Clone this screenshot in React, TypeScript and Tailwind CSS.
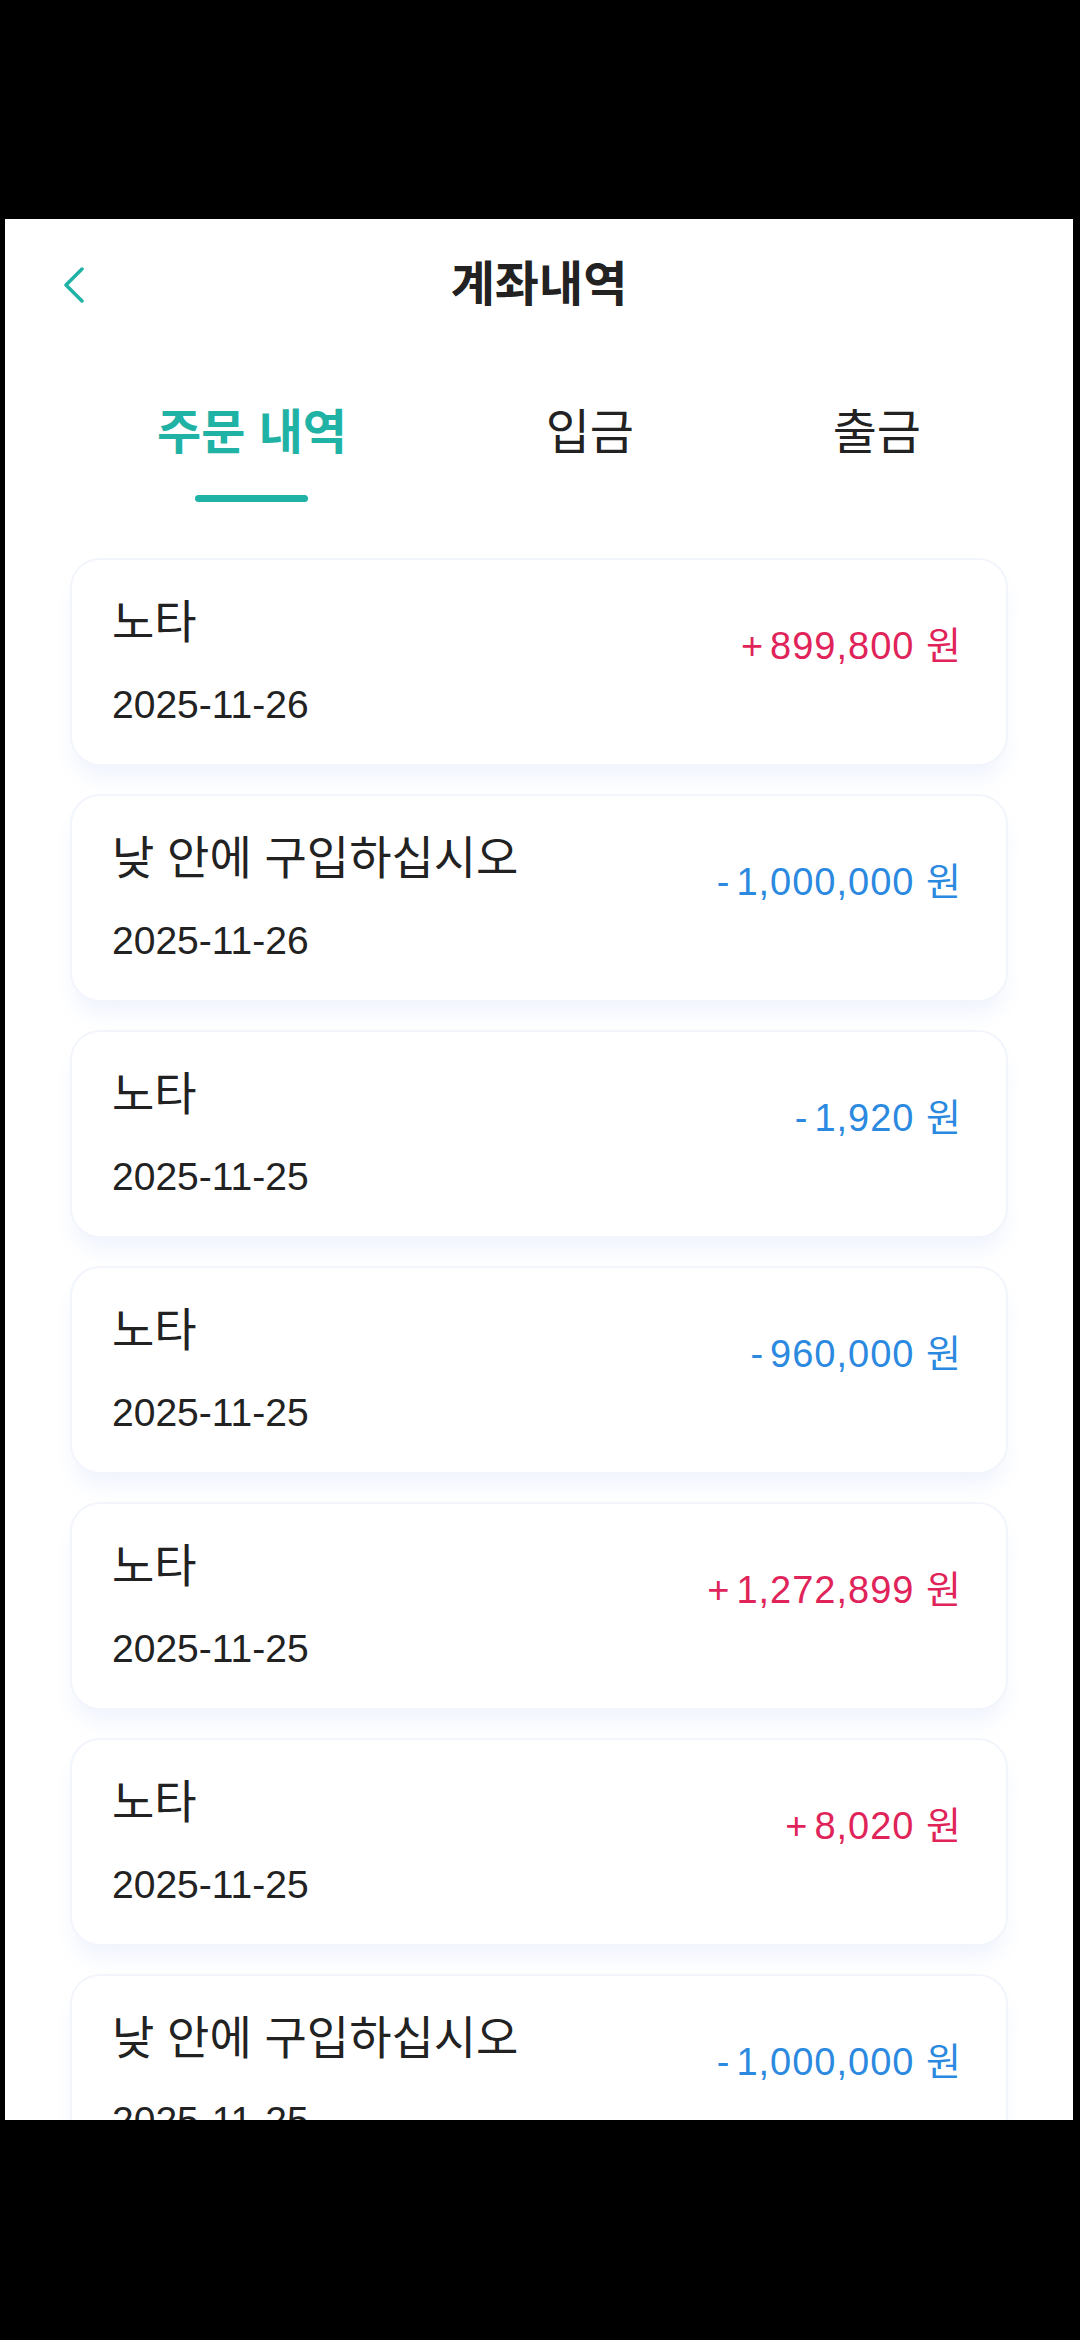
import React from "react";

const records = [
  { name: "노타", date: "2025-11-26", sign: "+", amount: "899,800" },
  { name: "낮 안에 구입하십시오", date: "2025-11-26", sign: "-", amount: "1,000,000" },
  { name: "노타", date: "2025-11-25", sign: "-", amount: "1,920" },
  { name: "노타", date: "2025-11-25", sign: "-", amount: "960,000" },
  { name: "노타", date: "2025-11-25", sign: "+", amount: "1,272,899" },
  { name: "노타", date: "2025-11-25", sign: "+", amount: "8,020" },
  { name: "낮 안에 구입하십시오", date: "2025-11-25", sign: "-", amount: "1,000,000" },
];

const tabs = ["주문 내역", "입금", "출금"];

function BackIcon() {
  return (
    <svg width="22" height="36" viewBox="0 0 22 36" fill="none">
      <polyline
        points="19,2 3,18 19,34"
        stroke="#1fb2a5"
        strokeWidth="3.5"
        strokeLinecap="round"
        strokeLinejoin="round"
      />
    </svg>
  );
}

function RecordCard({ item }: { item: (typeof records)[number] }) {
  const plus = item.sign === "+";
  return (
    <div className="flex h-[208px] shrink-0 items-center justify-between rounded-[30px] border-2 border-[#f2f5fc] bg-white pl-[40px] pr-[44px] shadow-[0_16px_20px_-4px_rgba(90,130,230,0.09)]">
      <div className="flex flex-col gap-[34px]">
        <span className="text-[46px] leading-[52px] text-[#222]">{item.name}</span>
        <span className="text-[39px] leading-[46px] text-[#222]">{item.date}</span>
      </div>
      {/* amount sits a bit above the card's middle */}
      <div
        className={`mb-[32px] flex items-center text-[38px] leading-[46px] tracking-[1px] ${
          plus ? "text-[#e0245a]" : "text-[#2b8ae0]"
        }`}
      >
        <span className="mr-[6px]">{item.sign}</span>
        <span>{item.amount} 원</span>
      </div>
    </div>
  );
}

export default function App() {
  return (
    <div
      className="h-[2340px] w-[1080px] bg-black pl-[5px] pr-[7px] pt-[219px]"
      style={{ fontFamily: '"Liberation Sans", "Noto Sans CJK KR", sans-serif' }}
    >
      <div className="flex h-[1901px] flex-col overflow-hidden bg-white">
        {/* Header */}
        <div className="grid h-[132px] shrink-0 grid-cols-[1fr_auto_1fr] items-center">
          <div className="pl-[58px]">
            <BackIcon />
          </div>
          <h1 className="text-[48px] font-bold leading-[60px] text-[#222]">계좌내역</h1>
          <div />
        </div>

        {/* Tabs */}
        <div className="flex shrink-0 justify-between px-[152px] pt-[52px]">
          {tabs.map((tab, i) => (
            <div key={tab} className="flex flex-col items-center">
              <span
                className={`text-[48px] leading-[60px] ${
                  i === 0 ? "font-bold text-[#1fb2a5]" : "text-[#222]"
                }`}
              >
                {tab}
              </span>
              <div
                className={`mt-[32px] h-[7px] rounded-full ${
                  i === 0 ? "w-[113px] bg-[#1fb2a5]" : "w-0"
                }`}
              />
            </div>
          ))}
        </div>

        {/* Records */}
        <div className="flex flex-col gap-[28px] px-[65px] pt-[56px]">
          {records.map((item, i) => (
            <RecordCard key={i} item={item} />
          ))}
        </div>
      </div>
    </div>
  );
}
